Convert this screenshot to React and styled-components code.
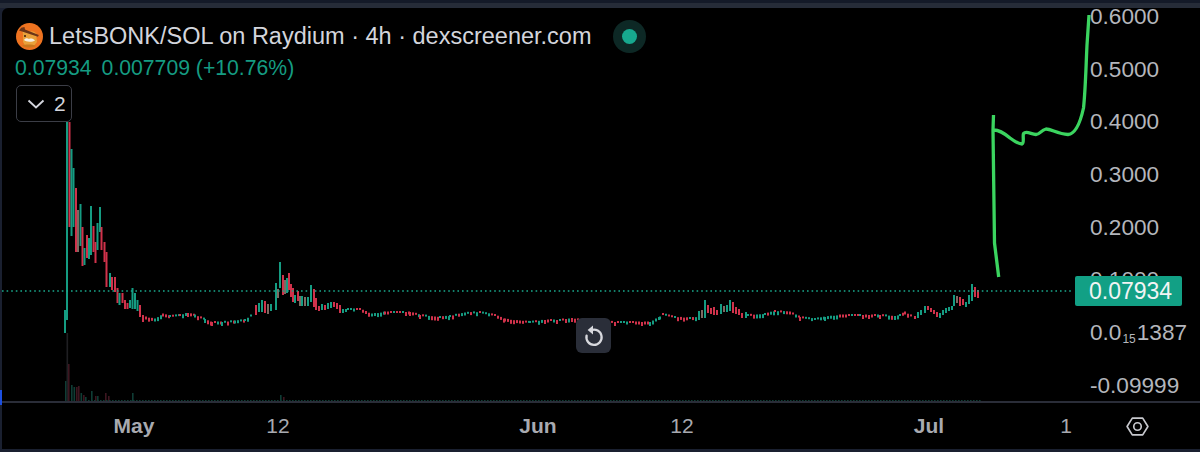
import React from 'react';
import styled, { createGlobalStyle } from 'styled-components';

const GREEN = '#159c82';
const RED = '#d0324b';

const GlobalStyle = createGlobalStyle`
  html, body { margin: 0; padding: 0; background: #1a2030; }
  body { font-family: "Liberation Sans", Arial, sans-serif; overflow: hidden; }
`;

const Page = styled.div`
  position: relative;
  width: 1200px;
  height: 452px;
  padding: 8px 0 3px 2px;
  box-sizing: border-box;
  background: linear-gradient(#141a28 0, #141a28 3px, #262c38 3px, #262c38 8px, #1a2030 8px);
`;

const Panel = styled.div`
  position: relative;
  height: 100%;
  background: #000;
  border-radius: 6px 0 0 0;
  display: grid;
  grid-template-rows: 395px 1fr;
  overflow: hidden;
`;

const ChartRow = styled.div`
  display: flex;
  border-bottom: 2px solid #2a2d38;
`;

const Plot = styled.div`
  position: relative;
  width: 1071px;
  flex: none;
`;

const ChartSvg = styled.svg`
  display: block;
  width: 1071px;
  height: 393px;
`;

const Legend = styled.div`
  position: absolute;
  top: 15px;
  left: 14px;
  display: flex;
  flex-direction: column;
  align-items: flex-start;
`;

const TitleRow = styled.div`
  display: flex;
  align-items: center;
  height: 27px;
  color: #d3d5dc;
  font-size: 23.5px;
  white-space: nowrap;
`;

const Logo = styled.svg`
  width: 27px;
  height: 27px;
  margin-right: 6px;
  flex: none;
`;

const StatusDot = styled.span`
  width: 15px;
  height: 15px;
  margin-left: 31px;
  border-radius: 50%;
  background: #17a88e;
  box-shadow: 0 0 0 9px #0d2825;
`;

const ValueRow = styled.div`
  display: flex;
  gap: 10px;
  margin-top: 8px;
  margin-left: -1px;
  color: ${GREEN};
  font-size: 21.2px;
  line-height: 20px;
  white-space: nowrap;
`;

const CollapseButton = styled.div`
  display: flex;
  align-items: center;
  gap: 8px;
  width: 56px;
  height: 37px;
  margin-top: 7px;
  padding-left: 9px;
  box-sizing: border-box;
  border: 1.5px solid #3b3d46;
  border-radius: 5px;
  background: #000;
  color: #d3d5dc;
  font-size: 21px;
`;

const ResetButton = styled.div`
  position: absolute;
  left: 574px;
  top: 310px;
  width: 35px;
  height: 35px;
  display: flex;
  align-items: center;
  justify-content: center;
  border-radius: 6px;
  background: #2a2e39;
`;

const PriceAxis = styled.div`
  position: relative;
  flex: 1;
  display: flex;
  flex-direction: column;
  gap: 34.7px;
  padding-left: 17px;
`;

const PriceLabel = styled.div`
  height: 18px;
  line-height: 18px;
  color: #b4b6bc;
  font-size: 22.6px;
  white-space: nowrap;
`;

const Subscript = styled.span`
  font-size: 12px;
  vertical-align: -3px;
  margin: 0 1px;
`;

const PriceTag = styled.div`
  position: absolute;
  left: 2px;
  top: 268px;
  width: 107px;
  height: 30px;
  line-height: 30px;
  padding-left: 14px;
  box-sizing: border-box;
  border-radius: 2px;
  background: #12a085;
  color: #f2f4f4;
  font-size: 23px;
`;

const TimeAxis = styled.div`
  display: flex;
  align-items: center;
  padding: 0 50px 0 102px;
`;

const TimeTick = styled.div`
  width: 60px;
  flex: none;
  margin-right: ${p => p.$gap || 0}px;
  text-align: center;
  color: #a8aab0;
  font-size: 21px;
  font-weight: ${p => (p.$major ? 700 : 400)};
  line-height: 24px;
`;

const AxisSettings = styled.svg`
  margin-left: auto;
  width: 25px;
  height: 23px;
`;

const Scribble = styled.svg`
  position: absolute;
  left: 0;
  top: 0;
  width: 1198px;
  height: 393px;
  pointer-events: none;
`;

const ScrollEdge = styled.div`
  position: absolute;
  left: 0;
  top: 390px;
  width: 2px;
  height: 15px;
  background: #1c4fe0;
`;

// hand read candles: x, top, bottom, colour
const spike = [
  [65, 310, 333, 'g'], [67, 122, 320, 'g'], [69.5, 122, 227, 'r'], [71.5, 149, 236, 'g'],
  [73.5, 168, 227, 'g'], [76, 188, 252, 'r'], [78, 210, 252, 'm'], [80.5, 204, 246, 'g'],
  [82.5, 227, 266, 'r'], [84.5, 248, 265, 'g'], [87, 235, 258, 'r'], [89, 238, 259, 'g'],
  [91, 206, 255, 'g'], [93.5, 226, 252, 'r'], [95.5, 242, 263, 'r'], [97.5, 223, 250, 'g'],
  [100, 207, 232, 'g'], [101.5, 227, 250, 'r'], [104.5, 242, 262, 'r'], [106.5, 252, 287, 'r'],
  [110, 273, 287, 'g'], [112, 277, 290, 'r'], [115, 277, 292, 'r'], [117.5, 288, 303, 'r'],
  [119.5, 293, 305, 'g'], [122.5, 293, 303, 'r'], [125, 300, 309, 'r'], [127.5, 303, 309, 'r'],
  [130, 300, 308, 'g'], [132.5, 288, 309, 'g'], [135, 293, 309, 'g'], [137.5, 300, 311, 'g'],
  [140, 305, 317, 'r'], [143, 315, 322, 'r'],
  // second bump around May 12
  [256, 305, 315, 'r'], [259, 303, 312, 'g'], [262, 300, 312, 'g'], [265, 301, 313, 'r'],
  [268, 304, 314, 'm'], [271, 304, 311, 'g'], [276, 283, 310, 'g'], [278, 289, 298, 'm'],
  [280, 262, 288, 'g'], [283, 275, 295, 'r'], [285, 280, 294, 'm'], [287, 278, 293, 'g'],
  [289, 273, 290, 'r'], [291, 284, 297, 'r'], [293, 288, 302, 'r'], [295, 295, 303, 'g'],
  [298, 291, 301, 'r'], [300, 296, 306, 'm'], [302, 296, 306, 'g'], [305, 297, 306, 'm'],
  [308, 297, 306, 'g'], [311, 285, 302, 'g'], [314, 289, 307, 'r'], [316, 298, 310, 'r'],
  [319, 306, 311, 'r'], [322, 304, 310, 'g'], [325, 305, 310, 'r'], [328, 303, 309, 'g'],
  [331, 302, 308, 'g'], [334, 302, 307, 'r'], [337, 303, 309, 'r'], [340, 305, 313, 'r'],
  [343, 309, 313, 'g'], [346, 309, 312, 'g'],
  // bump in mid June
  [699, 311, 320, 'g'], [702, 310, 318, 'm'], [705, 300, 318, 'g'], [708, 305, 313, 'r'],
  [711, 308, 314, 'r'], [714, 307, 315, 'r'], [717, 310, 315, 'r'], [721, 304, 314, 'g'],
  [724, 306, 312, 'm'], [727, 305, 312, 'g'], [730, 300, 311, 'g'], [733, 302, 313, 'r'],
  [736, 307, 314, 'r'], [739, 309, 315, 'r'], [742, 313, 318, 'r'], [746, 312, 318, 'g'],
  // last push into July
  [915, 316, 319, 'r'], [918, 312, 318, 'g'], [921, 310, 315, 'g'], [925, 306, 313, 'g'],
  [928, 306, 310, 'r'], [931, 308, 312, 'r'], [934, 310, 314, 'r'], [937, 312, 317, 'r'],
  [940, 313, 318, 'g'], [943, 310, 315, 'g'], [946, 308, 313, 'g'], [949, 307, 311, 'g'],
  [952, 306, 310, 'g'], [954, 295, 306, 'g'], [957, 296, 303, 'm'], [960, 297, 306, 'r'],
  [963, 299, 305, 'r'], [966, 302, 307, 'g'], [969, 295, 304, 'g'], [972, 284, 301, 'g'],
  [975, 287, 297, 'r'], [978, 290, 298, 'r'],
];

// the long flat stretches follow this line, one candle about every 3px
const flatPath = [
  [146, 318], [155, 320], [163, 315], [170, 317], [180, 316], [188, 314], [195, 316], [205, 320],
  [212, 323], [222, 323], [235, 322], [245, 321], [253, 315],
  [348, 310], [360, 310], [372, 315], [385, 313], [400, 313], [410, 313], [420, 316], [440, 318],
  [450, 317], [465, 314], [480, 313], [495, 316], [505, 320], [520, 322], [530, 323], [545, 321],
  [560, 321], [572, 319], [585, 322], [615, 323], [650, 323], [660, 318], [663, 315], [675, 318],
  [690, 319], [697, 318],
  [748, 316], [765, 315], [775, 312], [790, 313], [800, 318], [815, 320], [825, 318], [840, 316],
  [860, 316], [880, 316], [895, 317], [900, 316], [905, 313], [912, 317],
];

const breaks = [253, 697];

function buildCandles() {
  const out = spike.map(c => ({ x: c[0], top: c[1], bottom: c[2], kind: c[3] }));
  let n = 7;
  for (let i = 0; i < flatPath.length - 1; i++) {
    const [x0, y0] = flatPath[i];
    const [x1, y1] = flatPath[i + 1];
    if (breaks.includes(x0)) continue;
    for (let x = x0; x < x1; x += 3) {
      n = (n * 31 + 11) % 97;
      const y = y0 + ((y1 - y0) * (x - x0)) / (x1 - x0) + (n % 3) - 1;
      const h = 2 + (n % 3);
      const up = y1 < y0 ? n % 4 !== 0 : n % 4 === 0;
      out.push({ x, top: y - h / 2, bottom: y + h / 2, kind: up ? 'g' : 'r' });
    }
  }
  return out;
}

const candles = buildCandles();
const candleColor = { g: GREEN, r: RED, m: '#7d6a62' };

function volumeBars() {
  const bars = [
    [65, 20, 'g'], [66.5, 68, 'f'], [68, 37, 'r'], [71, 16, 'g'], [73.5, 14, 'g'], [76, 14, 'r'],
    [78, 15, 'r'], [80.5, 8, 'g'], [83, 6, 'r'], [85, 4, 'g'], [91, 10, 'g'], [95, 5, 'r'],
    [97, 5, 'g'], [105, 8, 'r'], [108, 5, 'r'], [132, 8, 'g'], [280, 6, 'g'], [283, 4, 'r'],
  ];
  let n = 3;
  for (let x = 88; x < 980; x += 3) {
    n = (n * 17 + 5) % 53;
    bars.push([x, 1 + (n % 3), n % 2 ? 'g' : 'r']);
  }
  return bars;
}

const volumeColor = { g: '#0f3d35', r: '#3d1620', f: '#1f1f22' };

function Chart() {
  return (
    <ChartSvg viewBox="2 8 1071 393">
      {volumeBars().map(([x, h, k], i) => (
        <rect key={i} x={x} y={401 - h} width="1.6" height={h} fill={volumeColor[k]} />
      ))}
      {candles.map((c, i) => (
        <rect key={i} x={c.x - 1} y={c.top} width="2" height={c.bottom - c.top} fill={candleColor[c.kind]} />
      ))}
      <line x1="2" y1="291" x2="1073" y2="291" stroke="#1aa88c" strokeWidth="1.6" strokeDasharray="1.6 3" />
    </ChartSvg>
  );
}

function TokenLogo() {
  return (
    <Logo viewBox="0 0 27 27">
      <circle cx="13.5" cy="13.5" r="13.5" fill="#ee7320" />
      <path d="M7 11l-1-5 5 2.5h6l3 1.5 1 9-4 5h-7l-3-5z" fill="#e9a13a" />
      <path d="M3 7.5l19 6.2.8-1.8L9 6.5 8.5 4 5.2 4.8z" fill="#6b3417" />
      <path d="M8 17c2-2.2 3.5-1.8 5-1 2-.8 4-.4 6 1.4-2 1.6-9 2-11-.4z" fill="#f6efe4" />
      <circle cx="9" cy="13" r="1" fill="#3a1c0c" />
      <path d="M6 22.5c3 2.6 10 2.8 14 .4-3-1.6-10-2-14-.4z" fill="#c9781e" />
    </Logo>
  );
}

export default function App() {
  return (
    <Page>
      <GlobalStyle />
      <Panel>
        <ChartRow>
          <Plot>
            <Chart />
            <Legend>
              <TitleRow>
                <TokenLogo />
                LetsBONK/SOL on Raydium · 4h · dexscreener.com
                <StatusDot />
              </TitleRow>
              <ValueRow>
                <span>0.07934</span>
                <span>0.007709 (+10.76%)</span>
              </ValueRow>
              <CollapseButton>
                <svg width="20" height="12" viewBox="0 0 20 12" fill="none">
                  <path d="M2.5 2.5l7.5 7 7.5-7" stroke="#d3d5dc" strokeWidth="1.9" />
                </svg>
                2
              </CollapseButton>
            </Legend>
            <ResetButton>
              <svg width="22" height="24" viewBox="0 0 22 24" fill="none">
                <path d="M8.2 6.2a7.6 7.6 0 1 1-4.6 5.4" stroke="#d8d9de" strokeWidth="2.3" strokeLinecap="round" />
                <path d="M10 1.6v9L4.6 6z" fill="#d8d9de" />
              </svg>
            </ResetButton>
          </Plot>
          <PriceAxis>
            <PriceLabel>0.6000</PriceLabel>
            <PriceLabel>0.5000</PriceLabel>
            <PriceLabel>0.4000</PriceLabel>
            <PriceLabel>0.3000</PriceLabel>
            <PriceLabel>0.2000</PriceLabel>
            <PriceLabel>0.1000</PriceLabel>
            <PriceLabel>0.0<Subscript>15</Subscript>1387</PriceLabel>
            <PriceLabel>-0.09999</PriceLabel>
            <PriceTag>0.07934</PriceTag>
          </PriceAxis>
        </ChartRow>
        <TimeAxis>
          <TimeTick $major $gap={84}>May</TimeTick>
          <TimeTick $gap={200}>12</TimeTick>
          <TimeTick $major $gap={84}>Jun</TimeTick>
          <TimeTick $gap={187}>12</TimeTick>
          <TimeTick $major $gap={77}>Jul</TimeTick>
          <TimeTick>1</TimeTick>
          <AxisSettings viewBox="0 0 24 22" fill="none">
            <path d="M7 3h10l5 8-5 8H7l-5-8z" stroke="#c8c9ce" strokeWidth="1.6" strokeLinejoin="round" />
            <circle cx="12" cy="11" r="3.6" stroke="#c8c9ce" strokeWidth="1.6" />
          </AxisSettings>
        </TimeAxis>
        <Scribble viewBox="2 8 1198 393">
          <path
            d="M993.5 115L993 130L994.5 243L998.7 277M994 130C999 130 1004 133 1010 138C1014 141 1018 144 1022 144C1024.5 143 1022.5 136 1023.5 133.5C1026 130.5 1031 134 1036 134.5C1040 134.5 1041 130 1046 129C1051 129 1058 134 1068 134.5C1075 134 1080 124 1083.5 108C1085.5 90 1086 65 1087 45L1089 15"
            stroke="#3bd45f"
            strokeWidth="3.3"
            fill="none"
            strokeLinejoin="round"
          />
        </Scribble>
      </Panel>
      <ScrollEdge />
    </Page>
  );
}
